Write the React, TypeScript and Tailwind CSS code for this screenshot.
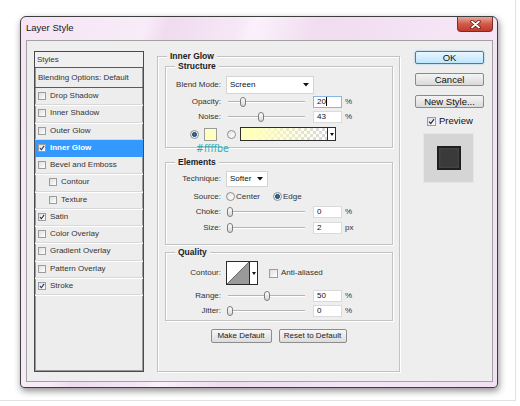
import React from 'react';

const sans = "font-['Liberation_Sans',Arial,sans-serif]";

function Check({ on = false, size = 8 }: { on?: boolean; size?: number }) {
  return (
    <div
      className="shrink-0 border border-[#9c9c9c] bg-gradient-to-br from-[#dedede] to-white flex items-center justify-center"
      style={{ width: size, height: size }}
    >
      {on && (
        <svg width={size - 2} height={size - 2} viewBox="0 0 8 8">
          <path d="M1.2 4.2 L3.2 6.3 L6.9 1.2" fill="none" stroke="#1d2f63" strokeWidth="1.4" />
        </svg>
      )}
    </div>
  );
}

function Radio({ on = false }: { on?: boolean }) {
  return (
    <div className="shrink-0 w-[9px] h-[9px] rounded-full border border-[#8e8e8e] bg-gradient-to-br from-[#e4e4e4] to-white flex items-center justify-center">
      {on && <div className="w-[5px] h-[5px] rounded-full bg-[#2a6fa8] border border-[#123c60]" />}
    </div>
  );
}

function Arrow() {
  return (
    <svg width="6" height="4" viewBox="0 0 6 4">
      <path d="M0 0 H6 L3 3.5 Z" fill="#111" />
    </svg>
  );
}

function Slider({ pct }: { pct: number }) {
  const left = Math.max(-1, (pct * 77) / 100 - 3);
  return (
    <div className="relative w-[77px] h-[12px] ml-[7px] shrink-0">
      <div className="absolute left-0 right-0 top-[5px] h-[2px] border-t border-[#b4b4b4] border-b border-b-white" />
      <div
        className="absolute top-[1px] w-[6px] h-[10px] rounded-[3px] border border-[#7d7d7d] bg-gradient-to-b from-white to-[#d6d6d6]"
        style={{ left }}
      />
    </div>
  );
}

function Num({ v, unit, focus = false }: { v: string; unit: string; focus?: boolean }) {
  return (
    <>
      <div
        className={`ml-[8px] w-[29px] h-[12px] bg-white border ${
          focus ? 'border-[#8ab6e0]' : 'border-[#dadada]'
        } text-[8px] leading-[10px] pl-[3px] flex items-center text-[#111]`}
      >
        {v}
        {focus && <span className="w-px h-[9px] bg-black" />}
      </div>
      <span className="ml-[3px] text-[8px] text-[#333]">{unit}</span>
    </>
  );
}

function Label({ children }: { children: React.ReactNode }) {
  return <div className="w-[55px] shrink-0 text-right text-[8px] text-[#333]">{children}</div>;
}

function Group({ title, className, children }: { title: string; className: string; children?: React.ReactNode }) {
  return (
    <div className={`relative border border-[#c2c2c2] shadow-[inset_1px_1px_0_#fff,1px_1px_0_#fff] ${className}`}>
      <div className="-mt-[6px] ml-[9px] w-fit bg-[#eeeeee] px-[3px] text-[8.5px] leading-[10px] font-bold text-[#222]">
        {title}
      </div>
      {children}
    </div>
  );
}

function Btn({ children, w }: { children: React.ReactNode; w: string }) {
  return (
    <div
      className={`${w} h-[14px] rounded-[2px] border border-[#8c8c8c] bg-gradient-to-b from-[#f7f7f7] to-[#dcdcdc] flex items-center justify-center text-[8px] text-[#222]`}
    >
      {children}
    </div>
  );
}

function SideBtn({ children, ok = false }: { children: React.ReactNode; ok?: boolean }) {
  return (
    <div
      className={`w-[69px] h-[13px] rounded-[2px] border flex items-center justify-center text-[9.5px] leading-none text-[#111] ${
        ok
          ? 'border-[#3c7fb1] bg-gradient-to-b from-[#eaf6fd] to-[#bee6fd] shadow-[0_0_2px_#7dc2f0]'
          : 'border-[#8a8a8a] bg-gradient-to-b from-[#f4f4f4] to-[#dadada]'
      }`}
    >
      {children}
    </div>
  );
}

const styleItems: { name: string; on?: boolean; indent?: boolean; sel?: boolean }[] = [
  { name: 'Drop Shadow' },
  { name: 'Inner Shadow' },
  { name: 'Outer Glow' },
  { name: 'Inner Glow', on: true, sel: true },
  { name: 'Bevel and Emboss' },
  { name: 'Contour', indent: true },
  { name: 'Texture', indent: true },
  { name: 'Satin', on: true },
  { name: 'Color Overlay' },
  { name: 'Gradient Overlay' },
  { name: 'Pattern Overlay' },
  { name: 'Stroke', on: true },
];

export default function App() {
  return (
    <div className={`w-[520px] h-[406px] bg-white overflow-hidden ${sans}`}>
      <div className="w-[516px] h-[401px] border-r border-b border-[#e2e2e2] pt-[16px] pl-[20px]">
        {/* window */}
        <div className="w-[478px] h-[372px] rounded-t-[6px] rounded-b-[4px] border border-[#3e3e3e] shadow-[1px_3px_7px_rgba(0,0,0,0.45)] bg-[linear-gradient(105deg,#f5e4f5_0%,#f8ecf8_22%,#efdcef_26%,#f6e7f6_38%,#fbf1fb_41%,#f0ddf0_52%,#f5e5f5_75%,#f2e0f2_100%)] flex flex-col">
          <div className="h-[23px] flex items-start justify-between">
            <div className="self-center pl-[5px] text-[9.5px] text-[#1a1a1a]">Layer Style</div>
            <div className="mr-[4px] w-[36px] h-[15px] rounded-b-[4px] border border-t-0 border-[#7b2d24] bg-gradient-to-b from-[#e8a79b] via-[#d0594a] to-[#c23a2c] flex items-center justify-center">
              <svg width="11" height="9" viewBox="0 0 11 9">
                <path d="M2 1.5 L9 7.5 M9 1.5 L2 7.5" stroke="#5c1a13" strokeWidth="3.4" strokeLinecap="round" />
                <path d="M2 1.5 L9 7.5 M9 1.5 L2 7.5" stroke="#fff" strokeWidth="1.8" strokeLinecap="round" />
              </svg>
            </div>
          </div>

          {/* content panel */}
          <div className="ml-[5px] w-[467px] h-[342px] border border-[#a2a2a2] bg-[#eeeeee] flex items-start pt-[10px] pl-[7px]">
            {/* styles list */}
            <div className="w-[110px] h-[321px] border border-[#4b4b4b] shadow-[inset_0_0_0_1px_#9a9a9a] bg-[#ededed] flex flex-col text-[8px] text-[#333]">
              <div className="h-[16px] shrink-0 flex items-center pl-[2px] border-b border-[#5a5a5a] bg-[#f0f0f0]">Styles</div>
              <div className="h-[20px] shrink-0 flex items-center pl-[3px] border-b border-[#5a5a5a]">Blending Options: Default</div>
              {styleItems.map((it) => (
                <div
                  key={it.name}
                  className={`h-[17.25px] shrink-0 flex items-center border-b ${
                    it.sel ? 'bg-[#3399ff] text-white font-bold border-[#3399ff]' : 'border-[#d8d8d8] shadow-[0_1px_0_#fff]'
                  } ${it.indent ? 'pl-[14px]' : 'pl-[3px]'}`}
                >
                  <Check on={it.on} />
                  <span className="ml-[4px]">{it.name}</span>
                </div>
              ))}
            </div>

            {/* main group */}
            <Group title="Inner Glow" className="ml-[13px] mt-[5px] w-[243px] h-[316px]">
              <Group title="Structure" className="ml-[7px] mt-[5px] w-[228px] h-[82px]">
                <div className="mt-[5px] h-[18px] flex items-center">
                  <Label>Blend Mode:</Label>
                  <div className="ml-[5px] w-[88px] h-[18px] bg-white border border-[#d4d4d4] flex items-center justify-between pl-[3px] pr-[4px] text-[8px] text-[#111]">
                    Screen
                    <Arrow />
                  </div>
                </div>
                <div className="h-[15px] flex items-center">
                  <Label>Opacity:</Label>
                  <Slider pct={20} />
                  <Num v="20" unit="%" focus />
                </div>
                <div className="h-[15px] flex items-center">
                  <Label>Noise:</Label>
                  <Slider pct={43} />
                  <Num v="43" unit="%" />
                </div>
                <div className="mt-[3px] h-[14px] flex items-center pl-[24px]">
                  <Radio on />
                  <div className="ml-[5px] w-[13px] h-[13px] border border-[#9a9a9a] bg-[#ffffbe]" />
                  <div className="ml-[10px]">
                    <Radio />
                  </div>
                  <div className="ml-[4px] w-[96px] h-[14px] border border-[#2e2e2e] flex">
                    <div className="flex-1 bg-[repeating-conic-gradient(#d8d8d8_0%_25%,#ffffff_0%_50%)] bg-[length:6px_6px]">
                      <div className="w-full h-full bg-[linear-gradient(to_right,#ffffbe_15%,rgba(255,255,190,0)_95%)]" />
                    </div>
                    <div className="w-[8px] border-l border-[#2e2e2e] bg-white flex items-center justify-center">
                      <svg width="4" height="3" viewBox="0 0 4 3">
                        <path d="M0 0 H4 L2 3 Z" fill="#111" />
                      </svg>
                    </div>
                  </div>
                </div>
                <div className="absolute left-[30px] -bottom-[7px] text-[10.5px] leading-[12px] text-[#36a9b0] font-['DejaVu_Sans_Condensed','Liberation_Sans',sans-serif]">
                  #ffffbe
                </div>
              </Group>

              <Group title="Elements" className="ml-[7px] mt-[14px] w-[228px] h-[83px]">
                <div className="mt-[4px] h-[16px] flex items-center">
                  <Label>Technique:</Label>
                  <div className="ml-[5px] w-[42px] h-[16px] bg-white border border-[#d4d4d4] flex items-center justify-between pl-[3px] pr-[4px] text-[8px] text-[#111]">
                    Softer
                    <Arrow />
                  </div>
                </div>
                <div className="mt-[2px] h-[15.5px] flex items-center text-[8px] text-[#333]">
                  <Label>Source:</Label>
                  <div className="ml-[5px]">
                    <Radio />
                  </div>
                  <span className="ml-[1px] w-[37px]">Center</span>
                  <Radio on />
                  <span className="ml-[1px]">Edge</span>
                </div>
                <div className="h-[15.5px] flex items-center">
                  <Label>Choke:</Label>
                  <Slider pct={0} />
                  <Num v="0" unit="%" />
                </div>
                <div className="h-[15.5px] flex items-center">
                  <Label>Size:</Label>
                  <Slider pct={1} />
                  <Num v="2" unit="px" />
                </div>
              </Group>

              <Group title="Quality" className="ml-[7px] mt-[7px] w-[228px] h-[69px]">
                <div className="mt-[4px] h-[24px] flex items-center">
                  <Label>Contour:</Label>
                  <div className="ml-[5px] w-[32px] h-[24px] border border-[#2a2a2a] flex bg-white">
                    <svg width="22" height="22" viewBox="0 0 22 22" className="shrink-0">
                      <path d="M0 22 L22 0 L22 22 Z" fill="#9a9a9a" />
                      <path d="M0 22 L22 0" stroke="#4a4a4a" strokeWidth="0.8" />
                    </svg>
                    <div className="flex-1 border-l border-[#2a2a2a] flex items-center justify-center">
                      <svg width="4" height="3" viewBox="0 0 4 3">
                        <path d="M0 0 H4 L2 3 Z" fill="#111" />
                      </svg>
                    </div>
                  </div>
                  <div className="ml-[11px]">
                    <Check size={9} />
                  </div>
                  <span className="ml-[3px] text-[8px] text-[#333]">Anti-aliased</span>
                </div>
                <div className="mt-[3px] h-[15px] flex items-center">
                  <Label>Range:</Label>
                  <Slider pct={50} />
                  <Num v="50" unit="%" />
                </div>
                <div className="h-[15px] flex items-center">
                  <Label>Jitter:</Label>
                  <Slider pct={0} />
                  <Num v="0" unit="%" />
                </div>
              </Group>

              <div className="mt-[8px] flex justify-center gap-[7px]">
                <Btn w="w-[61px]">Make Default</Btn>
                <Btn w="w-[68px]">Reset to Default</Btn>
              </div>
            </Group>

            {/* right column */}
            <div className="ml-[15px] w-[69px] flex flex-col">
              <SideBtn ok>OK</SideBtn>
              <div className="mt-[9px]">
                <SideBtn>Cancel</SideBtn>
              </div>
              <div className="mt-[9px]">
                <SideBtn>New Style...</SideBtn>
              </div>
              <div className="mt-[8px] h-[10px] pl-[12px] flex items-center">
                <Check on size={9} />
                <span className="ml-[3px] text-[9.5px] text-[#111]">Preview</span>
              </div>
              <div className="mt-[7px] ml-[8px] w-[51px] h-[50px] bg-[#d5d5d5] border border-[#e6e6e6] flex items-center justify-center">
                <div className="w-[24px] h-[24px] bg-[#3a3a3a] border-2 border-[#1f1f1f] shadow-[inset_0_0_3px_#555]" />
              </div>
            </div>
          </div>
        </div>
      </div>
    </div>
  );
}
